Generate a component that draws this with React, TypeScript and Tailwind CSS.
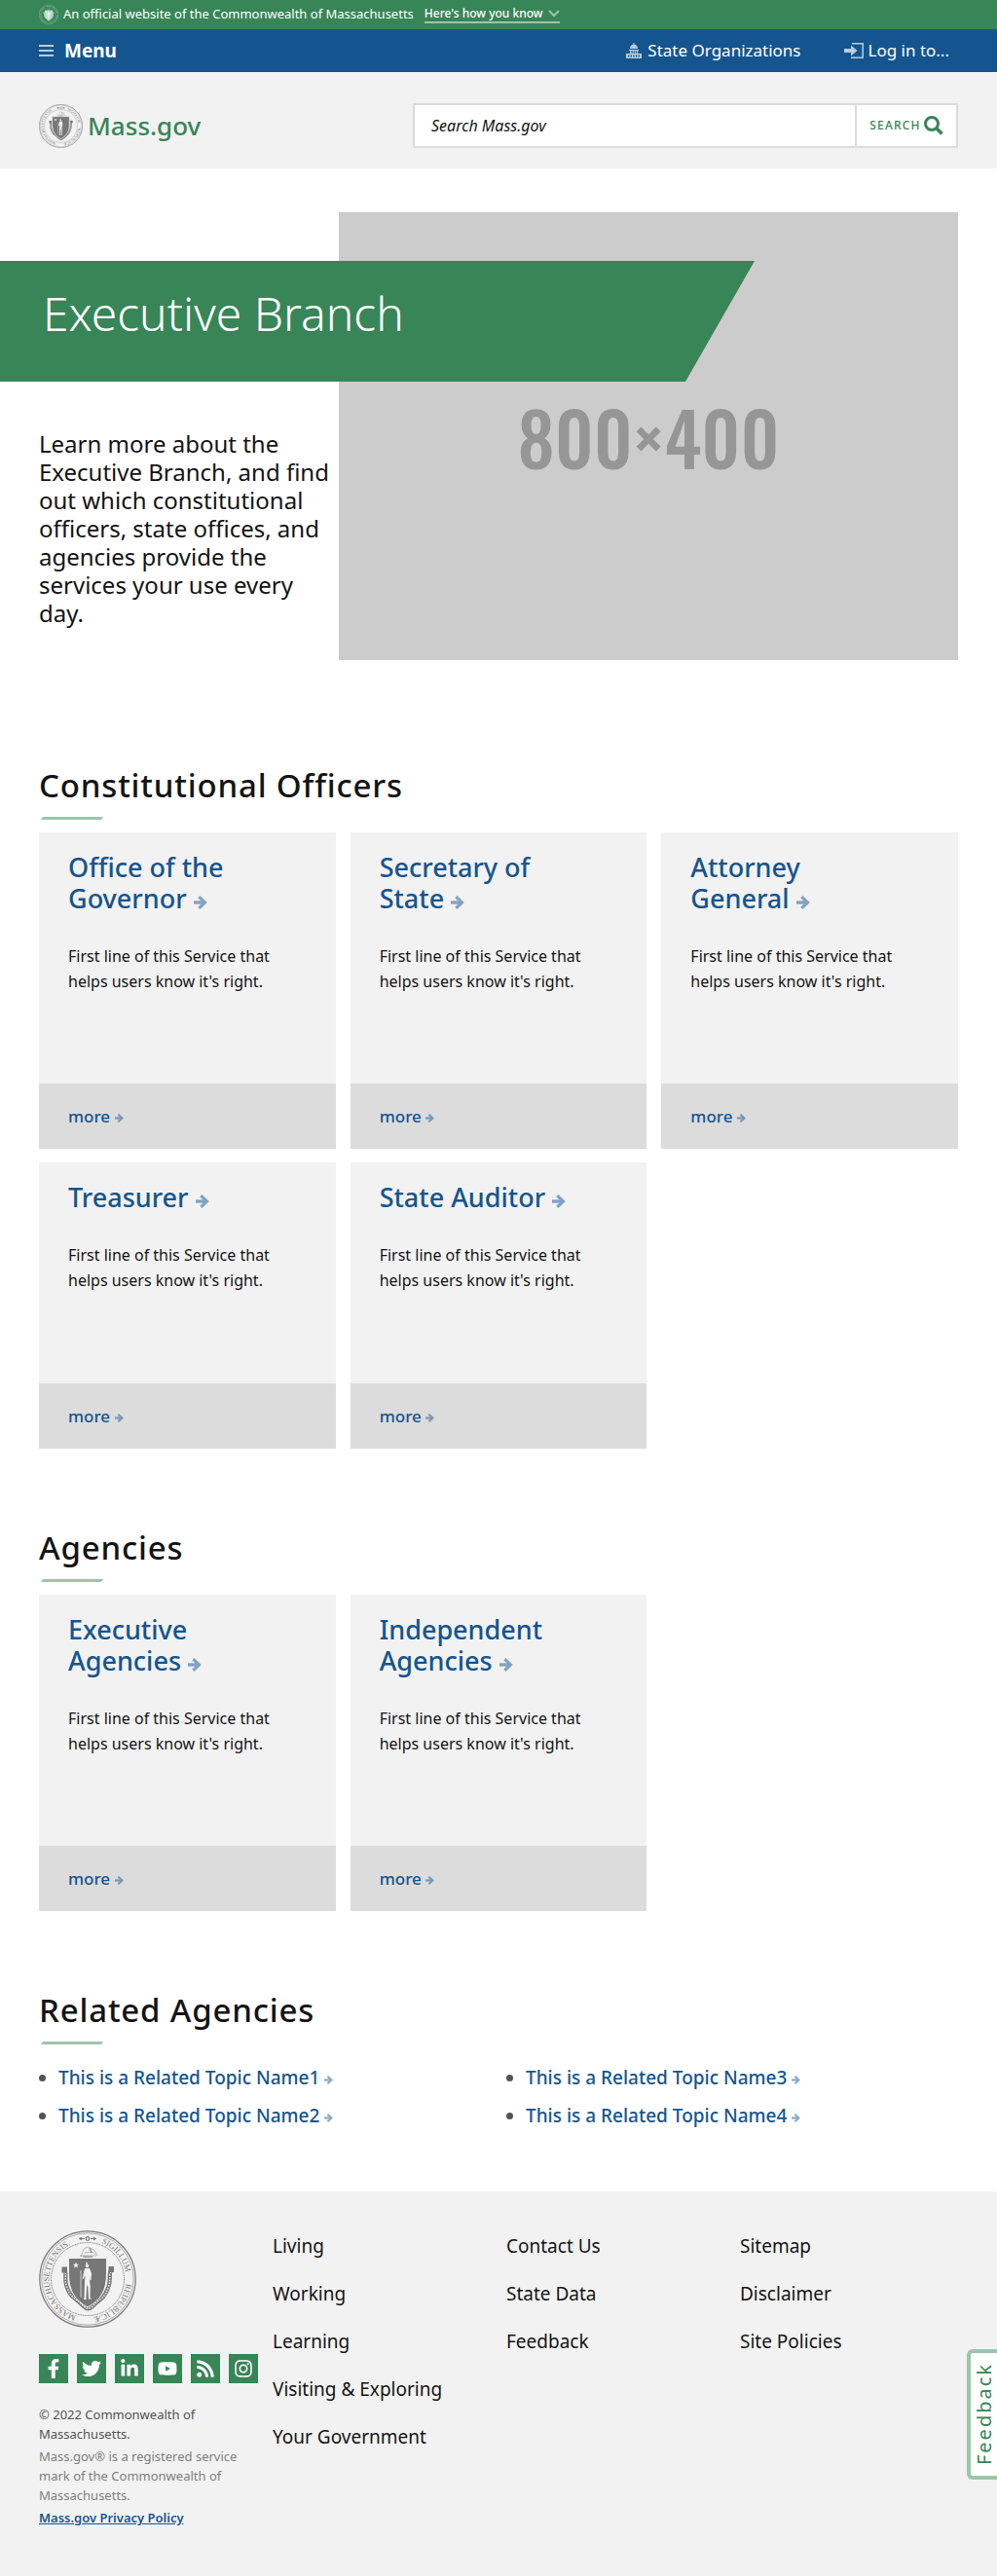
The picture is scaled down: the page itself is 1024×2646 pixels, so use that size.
import React, { useId } from "react";
import { FaFacebookF, FaTwitter, FaLinkedinIn, FaYoutube, FaRss, FaInstagram } from "react-icons/fa";

const cards = [
  "Office of the Governor",
  "Secretary of State",
  "Attorney General",
  "Treasurer",
  "State Auditor",
];
const agencies = ["Executive Agencies", "Independent Agencies"];
const related = ["1", "3", "2", "4"].map((n) => `This is a Related Topic Name${n}`);
const footerLinks = [
  ["Living", "Working", "Learning", "Visiting & Exploring", "Your Government"],
  ["Contact Us", "State Data", "Feedback"],
  ["Sitemap", "Disclaimer", "Site Policies"],
];
const social = [
  { name: "Facebook", Icon: FaFacebookF },
  { name: "Twitter", Icon: FaTwitter },
  { name: "LinkedIn", Icon: FaLinkedinIn },
  { name: "YouTube", Icon: FaYoutube },
  { name: "RSS", Icon: FaRss },
  { name: "Instagram", Icon: FaInstagram },
];

function Seal({ className, paper }: { className: string; paper: string }) {
  const id = useId();
  return (
    <svg viewBox="0 0 100 100" className={className} aria-hidden="true" fill="none" stroke="currentColor">
      <circle cx="50" cy="50" r="49.2" strokeWidth="1.2" />
      <circle cx="50" cy="50" r="47.2" strokeWidth="0.6" />
      <circle cx="50" cy="50" r="37.5" strokeWidth="1" strokeDasharray="1 0.7" />
      <path id={id} d="M50 89.5 A39.5 39.5 0 1 1 50.1 89.5" stroke="none" />
      <g fill="currentColor" stroke="none" fontFamily="Liberation Serif, serif" fontSize="8.5">
        <text>
          <textPath href={`#${id}`} startOffset="12">MASSACHUSETTENSIS.</textPath>
        </text>
        <text>
          <textPath href={`#${id}`} startOffset="138">SIGILLUM</textPath>
        </text>
        <text>
          <textPath href={`#${id}`} startOffset="190">REIPUBLICÆ</textPath>
        </text>
      </g>
      <path d="M41 8.5h6M53 8.5h6" strokeWidth="1.2" />
      <circle cx="50" cy="8.5" r="1.8" strokeWidth="1.2" />
      <path d="M44 6.5l-3 2 3 2zM56 6.5l3 2-3 2z" fill="currentColor" stroke="none" />
      <path d="M43 27l3-8 4-2 7 3 3 6M47 23l8-1 3 3M42 26h17" strokeWidth="0.8" opacity="0.6" />
      <path d="M45 27h10M52 18l2 5" strokeWidth="1.6" opacity="0.7" />
      <path
        d="M26 39c3 5 0 10 2 17s4 11 9 14c4 3 6 5 9 8 3 3 6 3 9 0 3-3 5-5 8-7 5-4 7-8 9-15 2-7-1-12 3-17"
        strokeWidth="4.2"
      />
      <path
        d="M26 41c3 5 0 9 2 15s4 11 9 14c4 3 6 5 9 8 3 3 6 3 9 0 3-3 5-5 8-7 5-4 7-8 9-15 2-7-1-10 3-15"
        stroke={paper}
        strokeWidth="1.4"
        strokeDasharray="1.6 1.2"
      />
      <path d="M23.500 37.500h5.500v6h-5.500zM71.500 37h5.500v6h-5.500z" fill="currentColor" stroke="none" />
      <path
        d="M30.500 28.500h39v16c0 17-6 27-19.500 34.500C36.500 71.500 30.500 61.500 30.500 44.500z"
        fill="currentColor"
        stroke={paper}
        strokeWidth="1"
      />
      <path d="M38 32.500l.9 2.200 2.300.1-1.800 1.500.6 2.300-2-1.300-2 1.300.6-2.300-1.800-1.500 2.300-.1z" fill={paper} stroke="none" />
      <g fill={paper} stroke="none">
        <circle cx="49.500" cy="36.500" r="1.800" />
        <path d="M48.500 32.500l1.500 1-.5 1.500-1.500-.5zM47 39h5l2 5-.5 7-1.200.5v-6l-.3 6 .8 6-.3 11 1.300 2h-2.800l-.7-12-.4-3-.9 3-.6 11 .3 1.500h-2.800l.6-2 .3-11 .3-7 .5-5-2 4-1-.5z" />
        <path d="M43.500 41v28l-.9-.5V41z" opacity="0.8" />
      </g>
    </svg>
  );
}

function Arrow({ className }: { className: string }) {
  return (
    <svg viewBox="0 0 14 14" className={className} aria-hidden="true" fill="none" stroke="currentColor">
      <path d="M0 7h12" strokeWidth="3.400" />
      <path d="M5.300 1.200L11.500 7l-6.200 5.800" strokeWidth="3.200" />
    </svg>
  );
}

function SectionTitle({ children }: { children: React.ReactNode }) {
  return (
    <>
      <h2 className="text-[33px] leading-10 font-medium tracking-wide text-[#141414]">{children}</h2>
      <div className="mt-3 ml-[2px] h-[3px] w-16 bg-[#9cc5ac] [clip-path:polygon(2px_0,100%_0,calc(100%-2px)_100%,0_100%)]" />
    </>
  );
}

function Card({ title }: { title: string }) {
  return (
    <article className="flex min-h-[294px] flex-col bg-[#f2f2f2]">
      <div className="flex-1 px-[30px] pt-5 pb-[92px]">
        <h3 className="max-w-[200px] text-[27px] leading-8 font-medium text-[#14558f]">
          <a href="#">
            {title} <Arrow className="inline h-[14px] w-[14px] align-[-1px] opacity-50" />
          </a>
        </h3>
        <p className="mt-[30px] text-base leading-[26px] text-[#141414]">
          First line of this Service that helps users know it's right.
        </p>
      </div>
      <div className="flex h-[67px] items-center bg-[#dcdcdc] px-[30px]">
        <a href="#" className="text-[17px] leading-6 font-medium text-[#14558f]">
          more <Arrow className="inline h-[9px] w-[9px] align-[0px] opacity-50" />
        </a>
      </div>
    </article>
  );
}

function Cards({ items }: { items: string[] }) {
  return (
    <div className="mt-[13px] grid grid-cols-3 gap-x-[15px] gap-y-[14px]">
      {items.map((t) => (
        <Card key={t} title={t} />
      ))}
    </div>
  );
}

export default function App() {
  return (
    <div className="relative bg-white font-['Noto_Sans',sans-serif] text-[#141414]">
      <div className="flex h-[30px] items-center bg-[#388557] px-10 text-white">
        <Seal className="h-5 w-5 text-[#c4dccd]" paper="#ffffff" />
        <span className="ml-[5px] text-[13px]">An official website of the Commonwealth of Massachusetts</span>
        <button className="ml-[11px] flex items-center border-b-2 border-[#9cc5ac] text-[12px] leading-4 font-medium">
          Here's how you know
          <svg viewBox="0 0 12 8" className="ml-[6px] h-2 w-3 text-[#9cc5ac]" fill="none" stroke="currentColor" strokeWidth="2">
            <path d="M1 1l5 5 5-5" />
          </svg>
        </button>
      </div>

      <nav className="flex h-11 items-center justify-between bg-[#14558f] px-10 text-white">
        <button className="flex items-center text-[19px] font-bold">
          <svg viewBox="0 0 15 12" className="mr-[11px] h-3 w-[15px] text-[#b9ccdd]" fill="currentColor">
            <path d="M0 0h15v2H0zM0 5h15v2H0zM0 10h15v2H0z" />
          </svg>
          Menu
        </button>
        <div className="flex items-center gap-11 pr-[9px] text-[17px]">
          <a href="#" className="flex items-center">
            <svg viewBox="0 0 16 16" className="mr-[6px] h-4 w-4 text-[#b9ccdd]" fill="currentColor">
              <path d="M7.500 0h1v1.500c2 .3 3.500 2 3.500 4.500H4c0-2.500 1.500-4.200 3.500-4.500zM3 7h10v1H3zM4 8h1.500v3H4zM6.600 8h1.200v3H6.600zM8.800 8H10v3H8.800zM11 8h1.300v3H11zM0 11h16v1.500H0zM0 14.500h16V16H0zM0 12h2v3H0zM3.300 12h1.300v3H3.300zM6 12h1.300v3H6zM8.700 12H10v3H8.700zM11.400 12h1.300v3h-1.300zM14 12h2v3h-2z" />
            </svg>
            State Organizations
          </a>
          <button className="flex items-center">
            <svg viewBox="0 0 20 16" className="mr-[5px] h-4 w-5 text-[#b9ccdd]">
              <path d="M8 .75h11.200v14.500H7" fill="none" stroke="currentColor" strokeWidth="1.500" />
              <path d="M0 6h7V2.500L13.500 8 7 13.500V10H0z" fill="currentColor" />
            </svg>
            Log in to...
          </button>
        </div>
      </nav>

      <header className="flex items-center justify-between bg-[#f2f2f2] px-10 pt-8 pb-[21px]">
        <a href="#" className="flex items-center">
          <Seal className="h-[45px] w-[45px] text-[#777777]" paper="#f2f2f2" />
          <span className="ml-[5px] text-[26px] leading-9 font-medium text-[#388557]">Mass.gov</span>
        </a>
        <form className="flex h-[46px] w-[560px] border-2 border-[#dcdcdc] bg-white" onSubmit={(e) => e.preventDefault()}>
          <input
            type="text"
            aria-label="Search Mass.gov"
            placeholder="Search Mass.gov"
            className="min-w-0 flex-1 px-[17px] text-base italic outline-none placeholder:text-[#141414]"
          />
          <button className="flex w-[104px] items-center justify-center border-l-2 border-[#dcdcdc] text-xs font-medium tracking-widest text-[#388557]">
            SEARCH
            <svg viewBox="0 0 20 20" className="ml-[3px] h-5 w-5" fill="none" stroke="currentColor">
              <circle cx="8" cy="8" r="6.500" strokeWidth="3" />
              <path d="M12.500 12.500l6 6" strokeWidth="3.600" />
            </svg>
          </button>
        </form>
      </header>

      <section className="relative flex px-10 pt-[45px]">
        <div className="w-[308px] shrink-0 pt-[223px]">
          <p className="text-[24px] leading-[29px]">
            Learn more about the Executive Branch, and find out which constitutional officers, state offices, and
            agencies provide the services your use every day.
          </p>
        </div>
        <div role="img" aria-label="800×400" className="flex h-[460px] flex-1 items-center justify-center bg-[#cccccc]">
          <span className="font-['Oswald','Noto_Sans_ExtraCondensed','Open_Sans_Condensed','Roboto_Condensed','Roboto',sans-serif] text-[75px] leading-none font-medium text-[#969696]">
            800×400
          </span>
        </div>
        <div className="absolute top-[95px] right-[249px] left-0 flex h-[124px] items-center bg-[#388557] pb-4 pl-11 [clip-path:polygon(0_0,100%_0,calc(100%-71px)_100%,0_100%)]">
          <h1 className="text-5xl font-light text-white">Executive Branch</h1>
        </div>
      </section>

      <main className="px-10">
        <section className="pt-[109px]">
          <SectionTitle>Constitutional Officers</SectionTitle>
          <Cards items={cards} />
        </section>
        <section className="pt-[82px]">
          <SectionTitle>Agencies</SectionTitle>
          <Cards items={agencies} />
        </section>
        <section className="pt-[82px]">
          <SectionTitle>Related Agencies</SectionTitle>
          <ul className="mt-[22px] grid grid-cols-2 gap-x-4 gap-y-[15px]">
            {related.map((t) => (
              <li key={t} className="flex items-center">
                <span className="mr-[13px] h-[7px] w-[7px] rounded-full bg-[#535353]" />
                <a href="#" className="text-[19px] leading-6 font-medium text-[#14558f]">
                  {t} <Arrow className="inline h-[9px] w-[9px] align-[0px] opacity-50" />
                </a>
              </li>
            ))}
          </ul>
        </section>
      </main>

      <footer className="mt-[66px] flex bg-[#f2f2f2] px-10 pt-10 pb-[51px]">
        <div className="w-[240px] shrink-0">
          <Seal className="h-[100px] w-[100px] text-[#777777]" paper="#f2f2f2" />
          <ul className="mt-[27px] flex gap-[9px]">
            {social.map(({ name, Icon }) => (
              <li key={name}>
                <a href="#" aria-label={name} className="flex h-[30px] w-[30px] items-center justify-center bg-[#388557] text-white">
                  <Icon className="h-5 w-5" />
                </a>
              </li>
            ))}
          </ul>
          <div className="mt-[22px] w-[215px] text-[13px] leading-5">
            <p className="text-[#535353]">© 2022 Commonwealth of Massachusetts.</p>
            <p className="mt-[3px] text-[#808080]">Mass.gov® is a registered service mark of the Commonwealth of Massachusetts.</p>
            <a href="#" className="mt-[3px] block font-semibold text-[#14558f] underline">Mass.gov Privacy Policy</a>
          </div>
        </div>
        <div className="-mr-4 grid flex-1 grid-cols-3 pt-1">
          {footerLinks.map((col) => (
            <ul key={col[0]} className="flex flex-col gap-[25px]">
              {col.map((l) => (
                <li key={l} className="text-[19px] leading-6">
                  <a href="#">{l}</a>
                </li>
              ))}
            </ul>
          ))}
        </div>
      </footer>

      <button className="absolute right-0 bottom-[100px] flex h-[134px] w-[31px] items-center justify-center rounded-l-md border-4 border-r-0 border-[#9cc5ac] bg-white text-[#388557]">
        <span className="rotate-180 text-xl leading-6 tracking-widest [writing-mode:vertical-rl]">Feedback</span>
      </button>
    </div>
  );
}
